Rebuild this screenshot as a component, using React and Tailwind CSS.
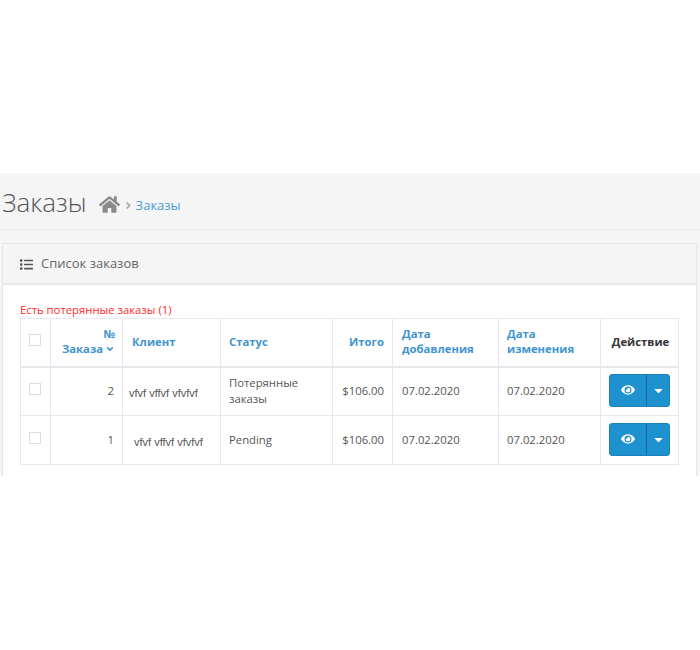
import { FaHome, FaList, FaEye, FaCaretDown, FaAngleRight, FaAngleDown } from "react-icons/fa";

const orders = [
  { id: 2, client: "vfvf vffvf vfvfvf", pad: "pl-[6px]", status: "Потерянные заказы" },
  { id: 1, client: "vfvf vffvf vfvfvf", pad: "pl-[11px]", status: "Pending" },
];

const App = () => {
  return (
    <div className="w-[700px] h-[650px] bg-white font-['Open_Sans',sans-serif] text-[12px] text-[#555]">
      <div className="h-[173px]" />

      <div className="h-[303px] bg-[#f5f5f5] overflow-hidden">
        {/* Page title and breadcrumb */}
        <div className="h-[58px] border-b-2 border-[#ededed] flex items-center pt-[1px]">
          <h1 className="ml-[2px] text-[26px] font-light text-[#555] leading-none">Заказы</h1>
          <FaHome className="ml-[12px] mt-[5px] text-[21px] text-[#8a8a8a]" />
          <FaAngleRight className="ml-[3px] mt-[7px] text-[11px] text-[#aaa]" />
          <a className="ml-[2px] mt-[8px] text-[13px] text-[#4a9bd4]">Заказы</a>
        </div>

        {/* Panel */}
        <div className="mt-[12px] ml-[2px] w-[695px] h-[240px] border-x border-t border-[#e5e5e5] bg-white">
          <div className="h-[41px] bg-[#f5f5f5] border-b-2 border-[#e8e8e8] flex items-center pl-[17px] pt-[1px]">
            <FaList className="text-[13px] text-[#555]" />
            <span className="ml-[8px] text-[13px] text-[#666]">Список заказов</span>
          </div>

          <div className="pl-[17px]">
            <p className="pt-[17px] text-[11.3px] leading-[16px] text-[#ff2a2a]">Есть потерянные заказы (1)</p>

            <table className="table-fixed w-[658px] border-collapse">
              <colgroup>
                <col className="w-[30px]" />
                <col className="w-[72px]" />
                <col className="w-[98px]" />
                <col className="w-[112px]" />
                <col className="w-[60px]" />
                <col className="w-[106px]" />
                <col className="w-[102px]" />
                <col className="w-[78px]" />
              </colgroup>
              <thead>
                <tr className="h-[48px] text-[11.3px] font-bold leading-[15px] text-[#3f94d1]">
                  <th className="border border-b-2 border-[#e6e8ee] text-center pr-[1px] pb-[4px]">
                    <span className="block mx-auto size-[12px] border border-[#ddd]" />
                  </th>
                  <th className="border border-b-2 border-[#e6e8ee] text-right pr-[7px] pb-[2px]">
                    №
                    <br />
                    <span className="inline-flex items-center gap-[2px]">
                      Заказа <FaAngleDown className="text-[10px]" />
                    </span>
                  </th>
                  <th className="border border-b-2 border-[#e6e8ee] text-left pl-[9px] pb-[2px]">Клиент</th>
                  <th className="border border-b-2 border-[#e6e8ee] text-left pl-[8px] pb-[2px]">Статус</th>
                  <th className="border border-b-2 border-[#e6e8ee] text-right pr-[8px] pb-[2px]">Итого</th>
                  <th className="border border-b-2 border-[#e6e8ee] text-left pl-[9px] pb-[2px]">Дата добавления</th>
                  <th className="border border-b-2 border-[#e6e8ee] text-left pl-[8px] pb-[2px]">Дата изменения</th>
                  <th className="border border-b-2 border-[#e6e8ee] text-center text-[#333] pl-[2px] pb-[2px]">Действие</th>
                </tr>
              </thead>
              <tbody>
                {orders.map((order) => (
                  <tr key={order.id} className="h-[49px] text-[11.3px] leading-[16px]">
                    <td className="border border-[#e6e8ee] text-center pr-[1px]">
                      <span className="block mx-auto mb-[4px] size-[12px] border border-[#ddd]" />
                    </td>
                    <td className="border border-[#e6e8ee] text-right pr-[8px]">{order.id}</td>
                    <td className={`border border-[#e6e8ee] text-[11px] font-['Liberation_Sans',sans-serif] whitespace-nowrap pt-[3px] ${order.pad}`}>
                      {order.client}
                    </td>
                    <td className="border border-[#e6e8ee] pl-[8px] pr-[4px]">{order.status}</td>
                    <td className="border border-[#e6e8ee] text-right pr-[8px]">$106.00</td>
                    <td className="border border-[#e6e8ee] pl-[9px]">07.02.2020</td>
                    <td className="border border-[#e6e8ee] pl-[8px]">07.02.2020</td>
                    <td className="border border-[#e6e8ee] pl-[8px] pb-[2px]">
                      <div className="flex w-[61px] h-[33px] rounded-[3px] border border-[#1b82bd] bg-[#1e91cf] text-white">
                        <span className="w-[36px] flex items-center justify-center">
                          <FaEye className="text-[14px]" />
                        </span>
                        <span className="flex-1 border-l border-[#17699c] flex items-center justify-center">
                          <FaCaretDown className="text-[13px]" />
                        </span>
                      </div>
                    </td>
                  </tr>
                ))}
              </tbody>
            </table>
          </div>
        </div>
      </div>
    </div>
  );
};

export default App;
